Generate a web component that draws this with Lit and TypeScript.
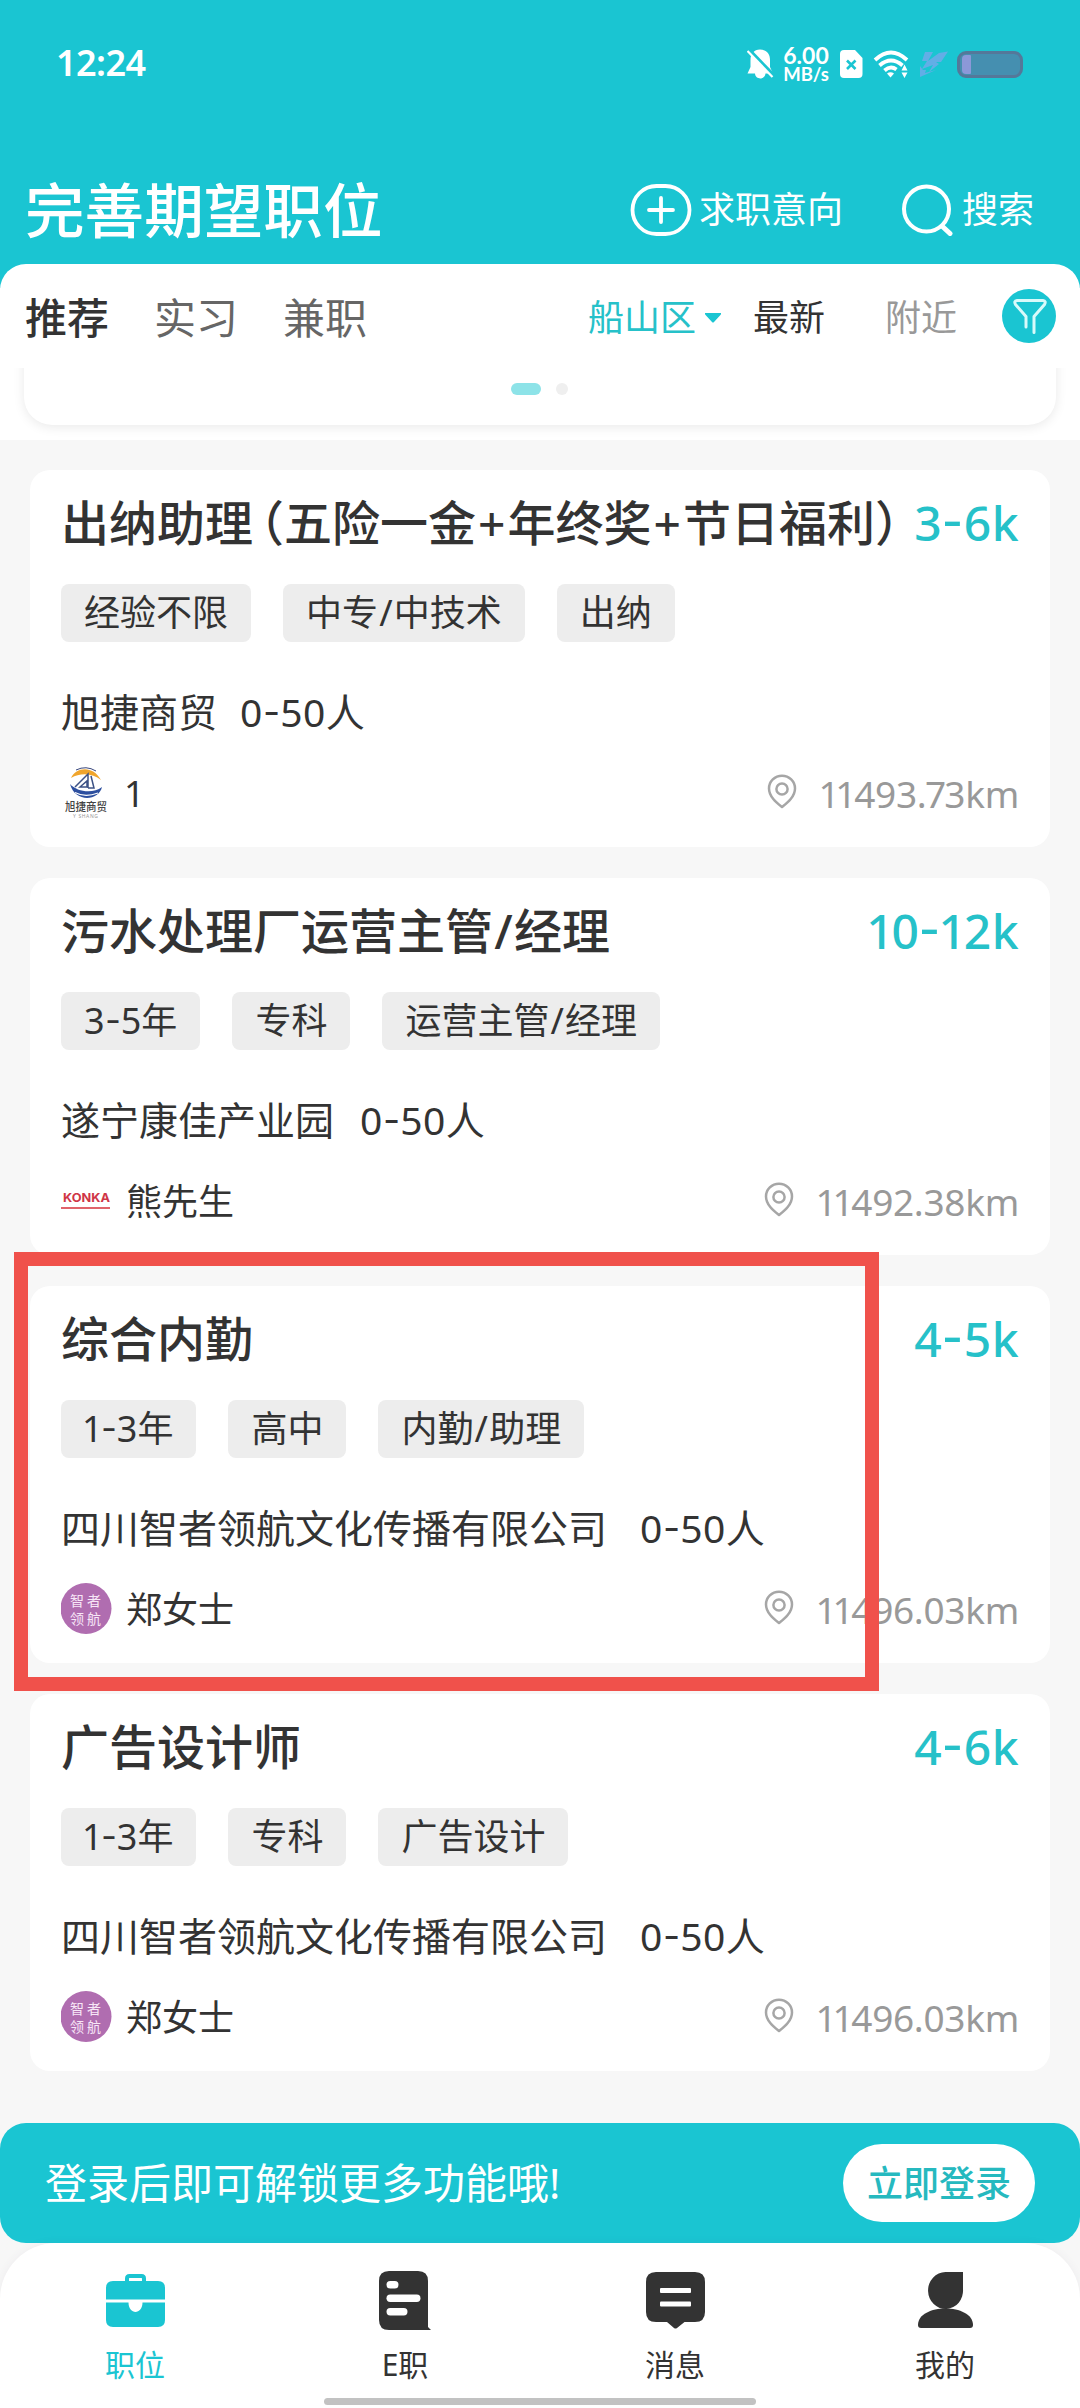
import { LitElement, html, svg, css, TemplateResult } from "lit";
import { customElement, property } from "lit/decorators.js";

interface Job {
  title: string;
  salary: string;
  tags: string[];
  company: string;
  size: string;
  contact: string;
  logo: "xujie" | "konka" | "zhizhe";
  distance: string;
}

const JOBS: Job[] = [
  { title: "出纳助理（五险一金+年终奖+节日福利）", salary: "3-6k", tags: ["经验不限", "中专/中技术", "出纳"], company: "旭捷商贸", size: "0-50人", contact: "1", logo: "xujie", distance: "11493.73km" },
  { title: "污水处理厂运营主管/经理", salary: "10-12k", tags: ["3-5年", "专科", "运营主管/经理"], company: "遂宁康佳产业园", size: "0-50人", contact: "熊先生", logo: "konka", distance: "11492.38km" },
  { title: "综合内勤", salary: "4-5k", tags: ["1-3年", "高中", "内勤/助理"], company: "四川智者领航文化传播有限公司", size: "0-50人", contact: "郑女士", logo: "zhizhe", distance: "11496.03km" },
  { title: "广告设计师", salary: "4-6k", tags: ["1-3年", "专科", "广告设计"], company: "四川智者领航文化传播有限公司", size: "0-50人", contact: "郑女士", logo: "zhizhe", distance: "11496.03km" },
];

const SPACED: Record<string, string> = { "-": "hy", "1": "one", "7": "seven", "/": "slash", "+": "plus", "（": "po", "）": "pc" };

/* Wraps the characters whose advance differs from the font's own. */
const spaced = (text: string) =>
  text
    .split(/([-17\/+（）])/)
    .filter((p) => p)
    .map((p) => (SPACED[p] ? html`<span class=${SPACED[p]}>${p}</span>` : p));

const glyphStyles = css`
  .hy { display: inline-block; width: 0.45em; text-align: center; line-height: 0; vertical-align: 0.09em; transform: scaleX(1.25); }
  .one { margin: 0 -0.055em; }
  .seven { margin: 0 -0.04em; }
  .slash { display: inline-block; width: 0.436em; text-align: center; line-height: 0; }
  .plus { display: inline-block; width: 0.655em; text-align: center; line-height: 0; }
  .po { font-feature-settings: "halt"; margin-left: 7px; }
  .pc { font-feature-settings: "halt"; }
`;

const logos: Record<Job["logo"], TemplateResult> = {
  xujie: html`<svg width="51" height="51" viewBox="0 0 51 51">
    <path d="M10 11C15 0 32-2 40 13C32 6.500 20 5 10 11Z" fill="#f0a52c" />
    <path d="M15 3Q25-2 35 4" fill="none" stroke="#39477c" stroke-width="1" />
    <path d="M9 17C16 25 32 27 41 20C38 34 14 36 9 17Z" fill="#2d4f9f" />
    <path d="M14 25.500Q24 31 37 26" fill="none" stroke="#fff" stroke-width="1.200" />
    <path d="M14 20L27 7V21M19 20L26 14V20ZM30 9L33 21H27" fill="none" stroke="#3d5285" stroke-width="1.500" />
    <text x="4" y="43.500" textLength="42" lengthAdjust="spacingAndGlyphs" font-size="11.500" font-weight="500" fill="#444">旭捷商贸</text>
    <text x="12" y="50.500" textLength="25" font-size="5" fill="#999">Y SHANG</text>
  </svg>`,
  konka: html`<svg width="51" height="51" viewBox="0 0 51 51">
    <text x="2" y="27" textLength="47" lengthAdjust="spacingAndGlyphs" font-family="Inter, sans-serif" font-weight="700" font-size="12" fill="#cf3546">KONKA</text>
    <rect x="0" y="32" width="49" height="2" fill="#e0636a" />
  </svg>`,
  zhizhe: html`<svg width="51" height="51" viewBox="0 0 51 51">
    <circle cx="25" cy="25.500" r="25.500" fill="#b06db0" />
    <text x="9" y="23" textLength="31" font-size="14" fill="#f7e6f7">智者</text>
    <text x="9" y="40.500" textLength="31" font-size="14" fill="#f7e6f7">领航</text>
  </svg>`,
};

@customElement("job-card")
class JobCard extends LitElement {
  @property({ attribute: false }) job!: Job;

  static styles = [
    glyphStyles,
    css`
      :host { display: flex; flex-direction: column; box-sizing: border-box; height: 377px; padding: 22px 31px 0 31px; background: #fff; border-radius: 20px; color: #333; white-space: nowrap; }
      .head { display: flex; justify-content: space-between; height: 60px; line-height: 61px; font-size: 48px; font-weight: 500; }
      .salary { color: #26c1c9; letter-spacing: 0.01em; }
      .tags { display: flex; gap: 32px; margin-top: 32px; }
      .tag { height: 58px; line-height: 58px; padding: 0 23px; border-radius: 8px; background: #ededed; font-size: 36px; }
      .company { display: flex; gap: 19px; margin-top: 45px; height: 50px; line-height: 50px; font-size: 39px; }
      .size { letter-spacing: 0.01em; }
      .foot { display: flex; align-items: center; margin-top: 29px; height: 52px; line-height: 52px; font-size: 36px; }
      .contact { margin-left: 14px; padding-top: 3px; flex: 1; }
      .pin { margin-right: 24px; }
      .distance { padding-top: 3px; color: #999; font-size: 37px; letter-spacing: -0.008em; }
      svg { display: block; }
    `,
  ];

  render() {
    const j = this.job;
    return html`
      <div class="head"><span>${spaced(j.title)}</span><span class="salary">${spaced(j.salary)}</span></div>
      <div class="tags">${j.tags.map((t) => html`<span class="tag">${spaced(t)}</span>`)}</div>
      <div class="company"><span style="width:${j.company.length * 40}px">${j.company}</span><span class="size">${spaced(j.size)}</span></div>
      <div class="foot">
        ${logos[j.logo]}
        <span class="contact">${spaced(j.contact)}</span>
        <svg class="pin" width="30" height="36" viewBox="0 0 30 36" fill="none" stroke="#a6a6a6" stroke-width="2.500">
          <path d="M15 33C10 29 2 23 2 14.500A13 12.800 0 0 1 28 14.500C28 23 20 29 15 33Z" stroke-linejoin="round" />
          <circle cx="15" cy="15" r="5.600" />
        </svg>
        <span class="distance">${spaced(j.distance)}</span>
      </div>
    `;
  }
}

const NAV = [
  {
    label: "职位",
    active: true,
    icon: svg`
      <path d="M24 12V9.500Q24 7 26.500 7H38.500Q41 7 41 9.500V12" fill="none" stroke="currentColor" stroke-width="4"/>
      <path d="M3 30.500V19Q3 12 10 12H55Q62 12 62 19V30.500Z" fill="currentColor"/>
      <path d="M3 33.500H25.500C25.500 46 39.500 46 39.500 33.500H62V51Q62 58 55 58H10Q3 58 3 51Z" fill="currentColor"/>`,
  },
  {
    label: "E职",
    active: false,
    icon: svg`
      <path d="M6 12Q6 2 16 2H45Q55 2 55 12V58L58 61H16Q6 61 6 51Z" fill="currentColor"/>
      <g fill="#fff"><rect x="13.500" y="12" width="12" height="7.500" rx="3.700"/><rect x="13.500" y="25.500" width="34" height="7.500" rx="3.700"/><rect x="13.500" y="39" width="21" height="7.500" rx="3.700"/></g>`,
  },
  {
    label: "消息",
    active: false,
    icon: svg`
      <path d="M3 13Q3 3 13 3H52Q62 3 62 13V43Q62 53 52 53H41.500L34 59Q32.500 60 31 59L24 53H13Q3 53 3 43Z" fill="currentColor"/>
      <g fill="#fff"><rect x="17" y="19" width="31" height="5" rx="1"/><rect x="17" y="32.500" width="31" height="5" rx="1"/></g>`,
  },
  {
    label: "我的",
    active: false,
    icon: svg`
      <path d="M50 3V20A17.500 18.500 0 1 1 32.500 3Z" fill="currentColor"/>
      <path d="M5 56C5 34 60 34 60 56Q60 59 57 59H8Q5 59 5 56Z" fill="currentColor"/>`,
  },
];

@customElement("app-root")
class AppRoot extends LitElement {
  static styles = [
    glyphStyles,
    css`
      :host { position: relative; display: flex; flex-direction: column; width: 1080px; height: 2408px; overflow: hidden; background: #f7f7f7; color: #333; font-family: "Noto Sans", "Noto Sans CJK SC", sans-serif; white-space: nowrap; }
      svg { display: block; }
      .header { height: 288px; flex: none; background: #1ac5d2; color: #fff; }
      .status { display: flex; align-items: center; height: 128px; padding: 0 57px 0 56px; }
      .time { flex: 1; font-size: 36px; line-height: 44px; padding-bottom: 2px; font-weight: 600; letter-spacing: -0.015em; }
      .speed { width: 46px; margin: 0 10px 0 9px; text-align: center; font-family: Lato, "Noto Sans", sans-serif; font-weight: 700; font-size: 23px; line-height: 20px; }
      .speed small { display: block; font-size: 18.5px; line-height: 18px; }
      .ic { margin-right: 10px; }
      .battery { box-sizing: border-box; width: 66px; height: 27px; margin-left: 8px; padding: 1px 2px; border: 3px solid #54789a; border-radius: 9px; background: #458fb0; }
      .level { width: 9px; height: 19px; border-radius: 4px 1px 1px 4px; background: #8c98d8; }
      .bar { display: flex; align-items: center; height: 108px; padding: 28px 46px 0 25px; }
      .bar h1 { flex: 1; margin: 0; font-size: 59.6px; font-weight: 500; line-height: 80px; }
      .action { display: flex; align-items: center; font-size: 36px; line-height: 50px; }
      .action.intent { margin-right: 58px; gap: 7px; }
      .action.search { gap: 9px; }
      .sheet { height: 176px; flex: none; margin-top: -24px; border-radius: 26px 26px 0 0; background: #fff; overflow: hidden; }
      .filters { display: flex; align-items: center; height: 104px; padding: 0 24px 0 25px; font-size: 36px; line-height: 104px; }
      .tab { margin-right: 45px; padding-top: 4px; font-size: 42px; color: #666; }
      .tab.on { font-weight: 500; color: #333; }
      .district { display: flex; align-items: center; gap: 8px; margin-left: auto; padding-top: 4px; color: #26c1c9; }
      .newest { margin-left: 31px; padding-top: 4px; }
      .nearby { margin: 0 45px 0 60px; padding-top: 4px; color: #999; }
      .promo { height: 72px; overflow: hidden; }
      .slide { display: flex; box-sizing: border-box; justify-content: center; align-items: flex-start; gap: 15px; height: 157px; margin: -100px 24px 0; padding: 115px 2px 0 0; border-radius: 28px; background: #fff; box-shadow: 0 2px 12px rgba(0, 0, 0, 0.09); }
      .dot { width: 12px; height: 12px; border-radius: 6px; background: #efefef; }
      .dot.on { width: 30px; background: #8de3e8; }
      .list { display: flex; flex-direction: column; gap: 31px; height: 1653px; flex: none; box-sizing: border-box; padding: 30px 30px 0 30px; }
      .login { display: flex; flex: none; align-items: center; box-sizing: border-box; height: 120px; margin-top: 30px; padding: 0 45px; border-radius: 26px; background: #1ac5d2; color: #fff; font-size: 42px; }
      .login p { flex: 1; margin: 0; line-height: 60px; }
      .button { width: 192px; height: 78px; border-radius: 39px; background: #fff; color: #26b9bf; font-size: 36px; font-weight: 500; line-height: 79px; text-align: center; }
      .nav { display: flex; flex: none; position: relative; box-sizing: border-box; height: 165px; padding-top: 26px; border-radius: 56px 56px 0 0; background: #fff; box-shadow: 0 0 10px rgba(90, 60, 110, 0.06); }
      .item { display: flex; flex: 1; flex-direction: column; align-items: center; font-size: 30px; line-height: 40px; }
      .item svg { margin-bottom: 14px; }
      .item.on { color: #1ac5d2; }
      .home { position: absolute; left: 324px; bottom: 3px; width: 432px; height: 7px; border-radius: 4px; background: #c2c2c2; }
      .mark { position: absolute; left: 14px; top: 1252px; box-sizing: border-box; width: 865px; height: 439px; border: 14px solid #f0514b; pointer-events: none; }
    `,
  ];

  render() {
    return html`
      <div class="header">
        <div class="status">
          <span class="time">12:24</span>
          <svg width="27" height="32" viewBox="0 0 27 32" fill="#fff">
            <path d="M13 1.500C20 1.500 23 6 23 12V19L26 25.500H18.500C18 32 8.500 32 8 25.500H0.500L3.500 19V12C3.500 6 7 1.500 13 1.500Z" />
            <path d="M1 1L28 29" stroke="#1ac5d2" stroke-width="4" />
            <path d="M0.500 3L25.500 29" stroke="#fff" stroke-width="2.200" />
          </svg>
          <div class="speed">6.00<small>MB/s</small></div>
          <svg class="ic" width="24" height="30" viewBox="0 0 24 30">
            <path d="M1 5Q1 1 5 1H16L23.500 9V25Q23.500 29 19.500 29H5Q1 29 1 25Z" fill="#fff" />
            <path d="M8 11.500L16.500 20M16.500 11.500L8 20" stroke="#1ac5d2" stroke-width="2.600" />
          </svg>
          <svg class="ic" width="36" height="30" viewBox="0 0 36 30" fill="none" stroke="#fff" stroke-width="3.800">
            <path d="M2 11Q18-4 34 11M6.500 16.500Q18 6.500 29.500 16.500M11.500 21.500Q17.500 16 23.500 20.500" />
            <path d="M14 24.500Q17.500 22 21 24.500L17.500 28.500Z" fill="#fff" stroke="none" />
            <path d="M28.500 21.500L31.500 15.500L34.500 21.500ZM28.500 23.500L31.500 29L34.500 23.500Z" fill="#fff" stroke="none" />
          </svg>
          <svg width="30" height="28" viewBox="0 0 30 28" fill="#62aee6">
            <path d="M6 2H14L9 11L20 3L29 1.500L22 12H17L20 14L10 22L14 15L3 19L8 11H3Z" />
            <path d="M1 16L4 20H7L6 23L17 20L1 27Z" />
          </svg>
          <div class="battery"><div class="level"></div></div>
        </div>
        <div class="bar">
          <h1>完善期望职位</h1>
          <div class="action intent">
            <svg width="62" height="52" viewBox="0 0 62 52" fill="none" stroke="#fff" stroke-width="3.800">
              <rect x="2.500" y="2" width="57" height="48" rx="24" />
              <path d="M19 26H43M31 14V38" stroke-linecap="round" />
            </svg>
            <span>求职意向</span>
          </div>
          <div class="action search">
            <svg width="52" height="52" viewBox="0 0 52 52" fill="none" stroke="#fff" stroke-width="4">
              <circle cx="25.500" cy="25" r="22.500" />
              <path d="M42 43L49 49.500" stroke-width="5" stroke-linecap="round" />
            </svg>
            <span>搜索</span>
          </div>
        </div>
      </div>
      <div class="sheet">
        <div class="filters">
          <span class="tab on">推荐</span><span class="tab">实习</span><span class="tab">兼职</span>
          <span class="district">船山区
            <svg width="18" height="10" viewBox="0 0 18 10"><path d="M1 0H17Q17.500 1 16 2.500L10 9Q9 10 8 9L2 2.500Q0.500 1 1 0Z" fill="#1ac5d2" /></svg>
          </span>
          <span class="newest">最新</span>
          <span class="nearby">附近</span>
          <svg width="54" height="54" viewBox="0 0 54 54">
            <circle cx="27" cy="27" r="27" fill="#1ac5d2" />
            <path d="M24 38V27.500L13.500 15.500Q11.500 12 15 11.500H41Q44.500 12 42.500 15.500L32 27.500V43.500" fill="none" stroke="#d8fafa" stroke-width="3" stroke-linecap="round" stroke-linejoin="round" />
          </svg>
        </div>
        <div class="promo"><div class="slide"><span class="dot on"></span><span class="dot"></span></div></div>
      </div>
      <div class="list">${JOBS.map((job) => html`<job-card .job=${job}></job-card>`)}</div>
      <div class="login"><p>登录后即可解锁更多功能哦!</p><span class="button">立即登录</span></div>
      <div class="nav">
        ${NAV.map((n) => html`<div class="item ${n.active ? "on" : ""}"><svg width="65" height="62" viewBox="0 0 65 62">${n.icon}</svg>${n.label}</div>`)}
        <div class="home"></div>
      </div>
      <div class="mark"></div>
    `;
  }
}
